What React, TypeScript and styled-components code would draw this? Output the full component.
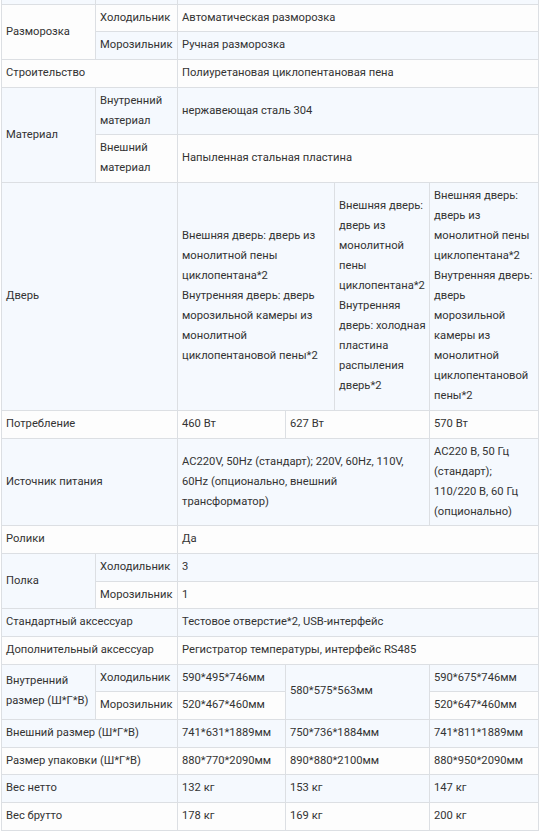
import React from "react";
import styled, { createGlobalStyle } from "styled-components";

const Global = createGlobalStyle`
  html, body { margin: 0; padding: 0; background: #ffffff; }
  body { font-family: Roboto, "Noto Sans", sans-serif; }
`;

const Viewport = styled.div`
  width: 541px;
  height: 832px;
  overflow: hidden;
  background: #ffffff;
`;

const Table = styled.table`
  margin: -24px 0 0 1px;
  width: 537px;
  table-layout: fixed;
  border-collapse: collapse;
  font-family: Roboto, "Noto Sans", sans-serif;
  font-size: 11.2px;
  line-height: 20px;
  color: #333333;

  tr:nth-child(odd) { background: #f5f9fe; }
  tr:nth-child(even) { background: #fdfdfd; }
`;

const Cell = styled.td`
  border: 1px solid #dcdfe3;
  padding: 3px 3px 3.7px 4px;
  vertical-align: middle;
  text-align: left;
  word-wrap: break-word;
`;

type Row = {
  cells: { text: React.ReactNode; col?: number; row?: number }[];
};

const rows: Row[] = [
  { cells: [{ text: "Температура", row: 1 }, { text: "Морозильник" }, { text: "-10~-25°C", col: 4 }] },
  { cells: [{ text: "Разморозка", row: 2 }, { text: "Холодильник" }, { text: "Автоматическая разморозка", col: 4 }] },
  { cells: [{ text: "Морозильник" }, { text: "Ручная разморозка", col: 4 }] },
  { cells: [{ text: "Строительство", col: 2 }, { text: "Полиуретановая циклопентановая пена", col: 4 }] },
  { cells: [{ text: "Материал", row: 2 }, { text: "Внутренний материал" }, { text: "нержавеющая сталь 304", col: 4 }] },
  { cells: [{ text: "Внешний материал" }, { text: "Напыленная стальная пластина", col: 4 }] },
  {
    cells: [
      { text: "Дверь", col: 2 },
      {
        text: (
          <>
            Внешняя дверь: дверь из монолитной пены циклопентана*2
            <br />
            Внутренняя дверь: дверь морозильной камеры из монолитной циклопентановой пены*2
          </>
        ),
        col: 2,
      },
      {
        text: (
          <>
            Внешняя дверь: дверь из монолитной пены циклопентана*2
            <br />
            Внутренняя дверь: холодная пластина распыления дверь*2
          </>
        ),
      },
      {
        text: (
          <>
            Внешняя дверь: дверь из монолитной пены циклопентана*2
            <br />
            Внутренняя дверь: дверь морозильной камеры из монолитной циклопентановой пены*2
          </>
        ),
      },
    ],
  },
  { cells: [{ text: "Потребление", col: 2 }, { text: "460 Вт" }, { text: "627 Вт", col: 2 }, { text: "570 Вт" }] },
  {
    cells: [
      { text: "Источник питания", col: 2 },
      { text: "AC220V, 50Hz (стандарт); 220V, 60Hz, 110V, 60Hz (опционально, внешний трансформатор)", col: 3 },
      {
        text: (
          <>
            AC220 В, 50 Гц (стандарт);
            <br />
            110/220 В, 60 Гц (опционально)
          </>
        ),
      },
    ],
  },
  { cells: [{ text: "Ролики", col: 2 }, { text: "Да", col: 4 }] },
  { cells: [{ text: "Полка", row: 2 }, { text: "Холодильник" }, { text: "3", col: 4 }] },
  { cells: [{ text: "Морозильник" }, { text: "1", col: 4 }] },
  { cells: [{ text: "Стандартный аксессуар", col: 2 }, { text: "Тестовое отверстие*2, USB-интерфейс", col: 4 }] },
  { cells: [{ text: "Дополнительный аксессуар", col: 2 }, { text: "Регистратор температуры, интерфейс RS485", col: 4 }] },
  {
    cells: [
      { text: "Внутренний размер (Ш*Г*В)", row: 2 },
      { text: "Холодильник" },
      { text: "590*495*746мм" },
      { text: "580*575*563мм", col: 2, row: 2 },
      { text: "590*675*746мм" },
    ],
  },
  { cells: [{ text: "Морозильник" }, { text: "520*467*460мм" }, { text: "520*647*460мм" }] },
  { cells: [{ text: "Внешний размер (Ш*Г*В)", col: 2 }, { text: "741*631*1889мм" }, { text: "750*736*1884мм", col: 2 }, { text: "741*811*1889мм" }] },
  { cells: [{ text: "Размер упаковки (Ш*Г*В)", col: 2 }, { text: "880*770*2090мм" }, { text: "890*880*2100мм", col: 2 }, { text: "880*950*2090мм" }] },
  { cells: [{ text: "Вес нетто", col: 2 }, { text: "132 кг" }, { text: "153 кг", col: 2 }, { text: "147 кг" }] },
  { cells: [{ text: "Вес брутто", col: 2 }, { text: "178 кг" }, { text: "169 кг", col: 2 }, { text: "200 кг" }] },
];

const widths = [94, 82, 108, 49, 95, 109];

export default function App() {
  return (
    <>
      <Global />
      <Viewport>
        <Table>
          <colgroup>
            {widths.map((w, i) => (
              <col key={i} style={{ width: w }} />
            ))}
          </colgroup>
          <tbody>
            {rows.map((r, i) => (
              <tr key={i}>
                {r.cells.map((c, j) => (
                  <Cell key={j} colSpan={c.col} rowSpan={c.row}>
                    {c.text}
                  </Cell>
                ))}
              </tr>
            ))}
          </tbody>
        </Table>
      </Viewport>
    </>
  );
}
